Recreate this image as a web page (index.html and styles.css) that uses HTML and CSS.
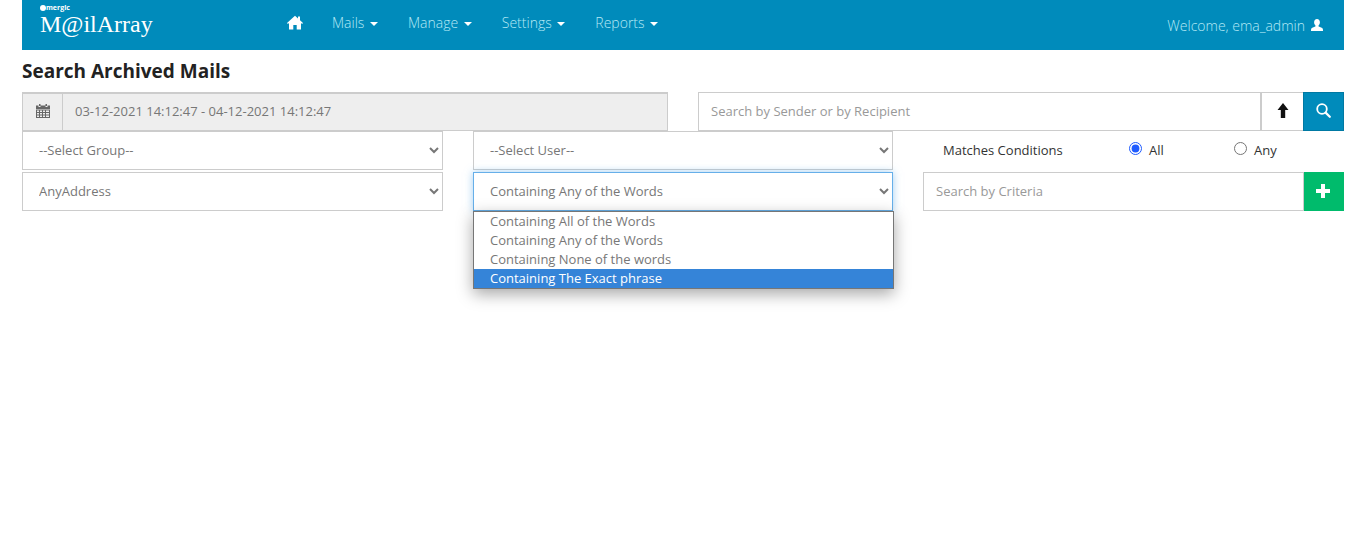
FILE: index.html
```html
<!DOCTYPE html>
<html lang="en">
<head>
<meta charset="utf-8">
<title>Search Archived Mails</title>
<link rel="stylesheet" href="styles.css">
</head>
<body>
<div class="page">
  <nav class="navbar">
    <div class="brand">
      <div class="brand-top"><span class="brand-dot"></span>mergic</div>
      <div class="brand-name">M@ilArray</div>
    </div>
    <ul class="nav-items">
      <li class="home"><svg width="16" height="15" viewBox="0 0 16 15"><path fill="#fff" d="M8 .8 0 8l.9 1L2 8v6.6h4.3V10h3.400v4.600H14V8l1.100 1 .9-1-3-2.700V1.500h-2v2L8 .8z"/></svg></li>
      <li>Mails <i class="caret"></i></li>
      <li>Manage <i class="caret"></i></li>
      <li>Settings <i class="caret"></i></li>
      <li>Reports <i class="caret"></i></li>
    </ul>
    <div class="welcome">Welcome, ema_admin
      <svg width="12" height="13" viewBox="0 0 12 13"><path fill="#fff" d="M6 0c1.800 0 2.900 1.400 2.900 3.300 0 1.300-.5 2.500-1.300 3.200-.3.300-.3.800.1 1 1.500.6 3.500 1.100 4.100 2.300.2.700.2 1.600.2 2.200H0c0-.6 0-1.500.2-2.200C.800 8.600 2.800 8.100 4.300 7.500c.4-.2.400-.7.1-1C3.600 5.800 3.100 4.600 3.100 3.300 3.100 1.400 4.200 0 6 0z"/></svg>
    </div>
  </nav>
  <h1 class="title">Search Archived Mails</h1>
  <div class="row row-first">
    <div class="daterange">
      <span class="addon"><svg width="14" height="14" viewBox="0 0 14 14"><path fill="#666" d="M3 0h1.500v2H3zM9.500 0H11v2H9.500zM0 1.500h2.500V3h2V1.500h5V3h2V1.500H14V5H0zM0 5.500h14V14H0zm1 1v1.500h2V6.500zm3 0v1.500h2V6.500zm3 0v1.500h2V6.500zm3 0v1.500h3V6.500zM1 9v1.500h2V9zm3 0v1.500h2V9zm3 0v1.500h2V9zm3 0v1.500h3V9zM1 11.500V13h2v-1.500zm3 0V13h2v-1.500zm3 0V13h2v-1.500zm3 0V13h3v-1.500z" fill-rule="evenodd"/></svg></span>
      <span class="date-value">03-12-2021 14:12:47 - 04-12-2021 14:12:47</span>
    </div>
    <div class="search-group">
      <input class="control grow" type="text" placeholder="Search by Sender or by Recipient">
      <button class="btn btn-up" type="button"><svg width="12" height="15" viewBox="0 0 12 15"><path fill="#111" d="M6 0 11.500 7H8.200V15H3.800V7H.5z"/></svg></button>
      <button class="btn btn-search" type="button"><svg width="15" height="15" viewBox="0 0 15 15"><circle cx="6" cy="6" r="4.800" fill="none" stroke="#fff" stroke-width="1.800"/><path d="m9.600 9.600 4.200 4.200" stroke="#fff" stroke-width="2.200" stroke-linecap="round"/></svg></button>
    </div>
  </div>
  <div class="row row-second">
    <select class="control col-a"><option>--Select Group--</option></select>
    <select class="control col-b"><option>--Select User--</option></select>
    <div class="conditions">
      <span class="cond-label">Matches Conditions</span>
      <label class="radio radio-all"><input type="radio" name="m" checked><span>All</span></label>
      <label class="radio radio-any"><input type="radio" name="m"><span>Any</span></label>
    </div>
  </div>
  <div class="row row-third">
    <select class="control col-a"><option>AnyAddress</option></select>
    <div class="col-b select-wrap">
      <select class="control focused"><option>Containing Any of the Words</option></select>
      <ul class="dropdown">
        <li>Containing All of the Words</li>
        <li>Containing Any of the Words</li>
        <li>Containing None of the words</li>
        <li class="active">Containing The Exact phrase</li>
      </ul>
    </div>
    <div class="criteria">
      <input class="control grow" type="text" placeholder="Search by Criteria">
      <button class="btn btn-add" type="button"><svg width="14" height="14" viewBox="0 0 14 14"><path fill="#fff" d="M5 0h4v5h5v4H9v5H5V9H0V5h5z"/></svg></button>
    </div>
  </div>
</div>
</body>
</html>
```
FILE: styles.css
```css
* { box-sizing: border-box; }
html, body { margin: 0; padding: 0; background: #fff; }
body { font-family: "Open Sans", sans-serif; font-size: 13px; color: #333; height: 539px; overflow: hidden; }
.page { margin: 0 22px; }

.navbar { height: 50px; background: #008bbb; display: flex; align-items: stretch; color: #b5e9f5; }
.brand { width: 248px; padding: 4px 0 0 18px; color: #fff; }
.brand-top { font-size: 7px; line-height: 7px; font-weight: 700; display: flex; align-items: center; }
.brand-dot { width: 6px; height: 6px; border-radius: 50%; background: #fff; }
.brand-name { font-family: "Liberation Serif", serif; font-size: 24px; line-height: 24px; margin-top: 1px; }
.nav-items { list-style: none; margin: 0; padding: 0; display: flex; align-items: center; font-size: 14px; flex: 1; height: 44px; }
.nav-items li { margin-right: 30px; white-space: nowrap; font-weight: 300; }
.nav-items .home { margin-right: 29px; display: flex; margin-left: 17px; }
.caret { display: inline-block; width: 0; height: 0; border-top: 4px solid #fff; border-left: 4px solid transparent; border-right: 4px solid transparent; vertical-align: middle; margin-left: 2px; }
.welcome { font-size: 14px; font-weight: 300; display: flex; align-items: center; gap: 6px; height: 50px; padding-right: 21px; }

.title { font-size: 19px; line-height: 24px; font-weight: 700; color: #222; margin: 9px 0; }

.row { display: flex; }
.row-third { margin-top: 2px; }
.control { height: 39px; border: 1px solid #ccc; border-radius: 0; background: #fff; font: 13px "Open Sans", sans-serif; color: #777; padding: 0 12px 2px; outline: none; display: block; }
.control::placeholder { color: #999; opacity: 1; }
.grow { flex: 1; min-width: 0; }

.daterange { width: 646px; height: 39px; display: flex; background: #eee; border: 1px solid #ccc; border-top-width: 2px; color: #777; margin-right: 30px; }
.addon { width: 40px; border-right: 1px solid #ccc; display: flex; align-items: center; justify-content: center; padding-bottom: 2px; }
.date-value { padding-left: 12px; line-height: 34px; }
.search-group { width: 646px; display: flex; }
.btn { border: 1px solid #ccc; padding: 0 0 2px; display: flex; align-items: center; justify-content: center; height: 39px; border-radius: 0; }
.btn-up { width: 42px; background: #fff; border-left-width: 1px; border-right-width: 0; }
.btn-search { width: 41px; background: #008bbb; border-color: #0079a3; }
.col-a { width: 421px; margin-right: 30px; }
.col-b { width: 420px; margin-right: 30px; }
.conditions { flex: 1; display: flex; align-items: center; color: #333; padding: 0 0 2px 20px; }
.cond-label { width: 186px; }
.radio { display: flex; align-items: center; gap: 7px; }
.radio input { margin: 0 0 2px; width: 13px; height: 13px; accent-color: #1f5bff; }
.radio-all { width: 105px; }
.criteria { flex: 1; display: flex; }
.btn-add { width: 40px; background: #00bb6c; border-color: #00bb6c; padding-right: 2px; }
.select-wrap { position: relative; }
.select-wrap .control { width: 100%; }
.focused { border-color: #66afe9; box-shadow: 0 0 8px rgba(102,175,233,.6); }
.dropdown { position: absolute; left: 0; top: 39px; width: 421px; margin: 0; padding: 0; list-style: none; background: #fff; border: 1px solid #767676; box-shadow: 0 5px 15px rgba(0,0,0,.35); color: #777; z-index: 5; }
.dropdown li { height: 19px; line-height: 19px; padding-left: 16px; }
.dropdown .active { background: #3584d8; color: #fff; }
```
